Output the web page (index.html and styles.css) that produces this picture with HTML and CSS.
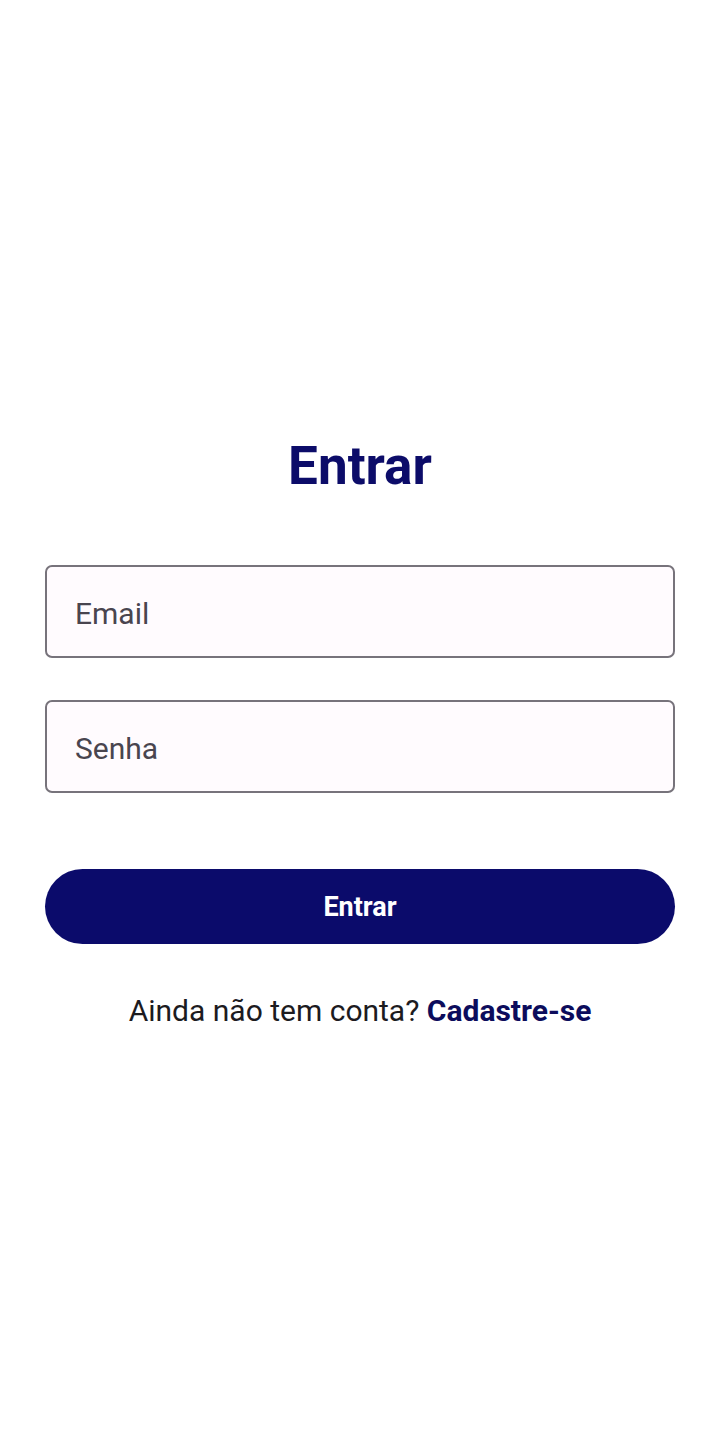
FILE: index.html
```html
<!DOCTYPE html>
<html lang="pt">
<head>
<meta charset="utf-8">
<title>Entrar</title>
<link rel="stylesheet" href="styles.css">
</head>
<body>
<main class="screen">
  <h1 class="title">Entrar</h1>
  <form class="form">
    <div class="field"><span class="placeholder">Email</span></div>
    <div class="field"><span class="placeholder">Senha</span></div>
    <button type="button" class="btn">Entrar</button>
  </form>
  <p class="signup">Ainda não tem conta? <a class="link">Cadastre-se</a></p>
</main>
</body>
</html>
```
FILE: styles.css
```css
html, body {
  margin: 0;
  padding: 0;
  background: #ffffff;
}
body {
  font-family: Roboto, "Noto Sans", sans-serif;
}
.screen {
  display: flex;
  flex-direction: column;
  align-items: stretch;
  padding: 436px 45px 0 45px;
}
.title {
  margin: 0;
  text-align: center;
  font-size: 53px;
  line-height: 60px;
  font-weight: 700;
  color: #0c0c69;
}
.form {
  display: flex;
  flex-direction: column;
  margin-top: 69px;
}
.field {
  box-sizing: border-box;
  height: 93px;
  border: 2px solid #77737b;
  border-radius: 7px;
  background: #fffbfe;
  display: flex;
  align-items: center;
  padding-left: 28px;
  padding-top: 4px;
  margin-bottom: 42px;
}
.field + .field {
  margin-bottom: 76px;
}
.placeholder {
  font-size: 30px;
  color: #49454f;
}
.btn {
  height: 75px;
  border: none;
  border-radius: 38px;
  background: #0b0b6b;
  color: #ffffff;
  font-family: Roboto, "Noto Sans", sans-serif;
  font-weight: 700;
  font-size: 27px;
}
.signup {
  margin: 47px 0 0 0;
  text-align: center;
  font-size: 30px;
  line-height: 40px;
  color: #1c1b1f;
}
.link {
  font-weight: 700;
  color: #0c0c5c;
}
```
